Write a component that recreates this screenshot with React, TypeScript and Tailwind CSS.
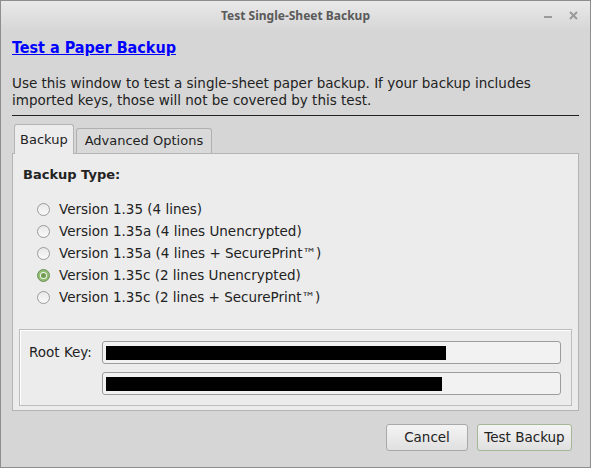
import { FC } from "react";

const options = [
  "Version 1.35 (4 lines)",
  "Version 1.35a (4 lines Unencrypted)",
  "Version 1.35a (4 lines + SecurePrint™)",
  "Version 1.35c (2 lines Unencrypted)",
  "Version 1.35c (2 lines + SecurePrint™)",
];

const Radio: FC<{ checked?: boolean }> = ({ checked }) =>
  checked ? (
    <span className="flex h-[13px] w-[13px] shrink-0 items-center justify-center rounded-full border border-[#6e8f58] bg-[#92bd72]">
      <span className="flex h-[7px] w-[7px] items-center justify-center rounded-full bg-[#eef4ea]">
        <span className="h-[5px] w-[5px] rounded-full bg-[#6f9a52]"></span>
      </span>
    </span>
  ) : (
    <span className="h-[13px] w-[13px] shrink-0 rounded-full border border-[#9a9a9a] bg-gradient-to-b from-[#e8e8e8] to-[#fafafa]"></span>
  );

const KeyField: FC<{ bar: number }> = ({ bar }) => (
  <div className="flex h-[23px] flex-1 items-center rounded-[3px] border border-[#9c9c9c] bg-[#f2f2f2] px-[3px]">
    <div className="h-[14px] bg-black" style={{ width: bar }}></div>
  </div>
);

export default function App() {
  return (
    <div className="flex h-[468px] w-[591px] flex-col border border-[#8e8e8e] bg-[#d6d6d6] font-['DejaVu_Sans',sans-serif] text-[13.5px] text-[#222]">
      <div className="relative flex h-[30px] shrink-0 items-center justify-center bg-gradient-to-b from-[#e9e9e9] to-[#d6d6d6]">
        <span className="font-['Noto_Sans',sans-serif] text-[12px] font-bold text-[#5a5a5a]">
          Test Single-Sheet Backup
        </span>
        <div className="absolute right-[12px] top-[10px] flex items-center gap-[17px]">
          <span className="mt-[2px] block h-[2px] w-[8px] bg-[#9a9a9a]"></span>
          <svg width="9" height="9" viewBox="0 0 9 9">
            <path d="M1 1L8 8M8 1L1 8" stroke="#9a9a9a" strokeWidth="2" />
          </svg>
        </div>
      </div>

      <div className="flex flex-1 flex-col px-[11px] pt-[7px]">
        <a
          href="#"
          className="w-fit font-['DejaVu_Sans_Condensed','DejaVu_Sans',sans-serif] text-[16px] font-bold leading-[20px] text-[#0000ff] underline"
        >
          Test a Paper Backup
        </a>
        <p className="mt-[17px] leading-[17px]">
          Use this window to test a single-sheet paper backup. If your backup includes
          imported keys, those will not be covered by this test.
        </p>
        <div className="mt-[6px] h-px bg-[#222]"></div>

        <div className="mt-[8px] flex items-end pl-[2px]">
          <div className="relative z-10 -mb-px flex h-[30px] items-center rounded-t-[3px] border border-b-0 border-[#b4b4b4] bg-[#ececec] px-[5px] text-[13px]">
            Backup
          </div>
          <div className="ml-[2px] flex h-[25px] items-center rounded-t-[3px] border border-b-0 border-[#b0b0b0] bg-[#d9d9d9] px-[8px] text-[13px]">
            Advanced Options
          </div>
        </div>

        <div className="flex h-[258px] flex-col border border-[#b4b4b4] bg-[#ececec] px-[6px] pt-[12px]">
          <div className="pl-[4px] text-[13px] font-bold leading-[18px]">Backup Type:</div>
          <div className="mt-[14px] flex flex-col pl-[18px]">
            {options.map((o, i) => (
              <label key={o} className="flex h-[22px] items-center gap-[9px]">
                <Radio checked={i === 3} />
                <span>{o}</span>
              </label>
            ))}
          </div>
          <div className="mt-[21px] flex flex-col gap-[8px] border border-[#bdbdbd] pb-[10px] pl-[9px] pr-[10px] pt-[11px] shadow-[inset_1px_1px_0_#fff]">
            <div className="flex items-center">
              <span className="w-[73px] text-[13.5px]">Root Key:</span>
              <KeyField bar={340} />
            </div>
            <div className="flex items-center pl-[73px]">
              <KeyField bar={336} />
            </div>
          </div>
        </div>

        <div className="mt-[13px] flex justify-end gap-[9px] pr-[7px]">
          <button
            type="button"
            className="h-[27px] w-[82px] rounded-[3px] border border-[#a9a9a9] bg-gradient-to-b from-[#f4f4f4] to-[#e0e0e0] text-[13.5px]"
          >
            Cancel
          </button>
          <button
            type="button"
            className="h-[27px] w-[95px] rounded-[3px] border border-[#a4b896] bg-gradient-to-b from-[#f4f4f4] to-[#e0e0e0] text-[13.5px]"
          >
            Test Backup
          </button>
        </div>
      </div>
    </div>
  );
}
